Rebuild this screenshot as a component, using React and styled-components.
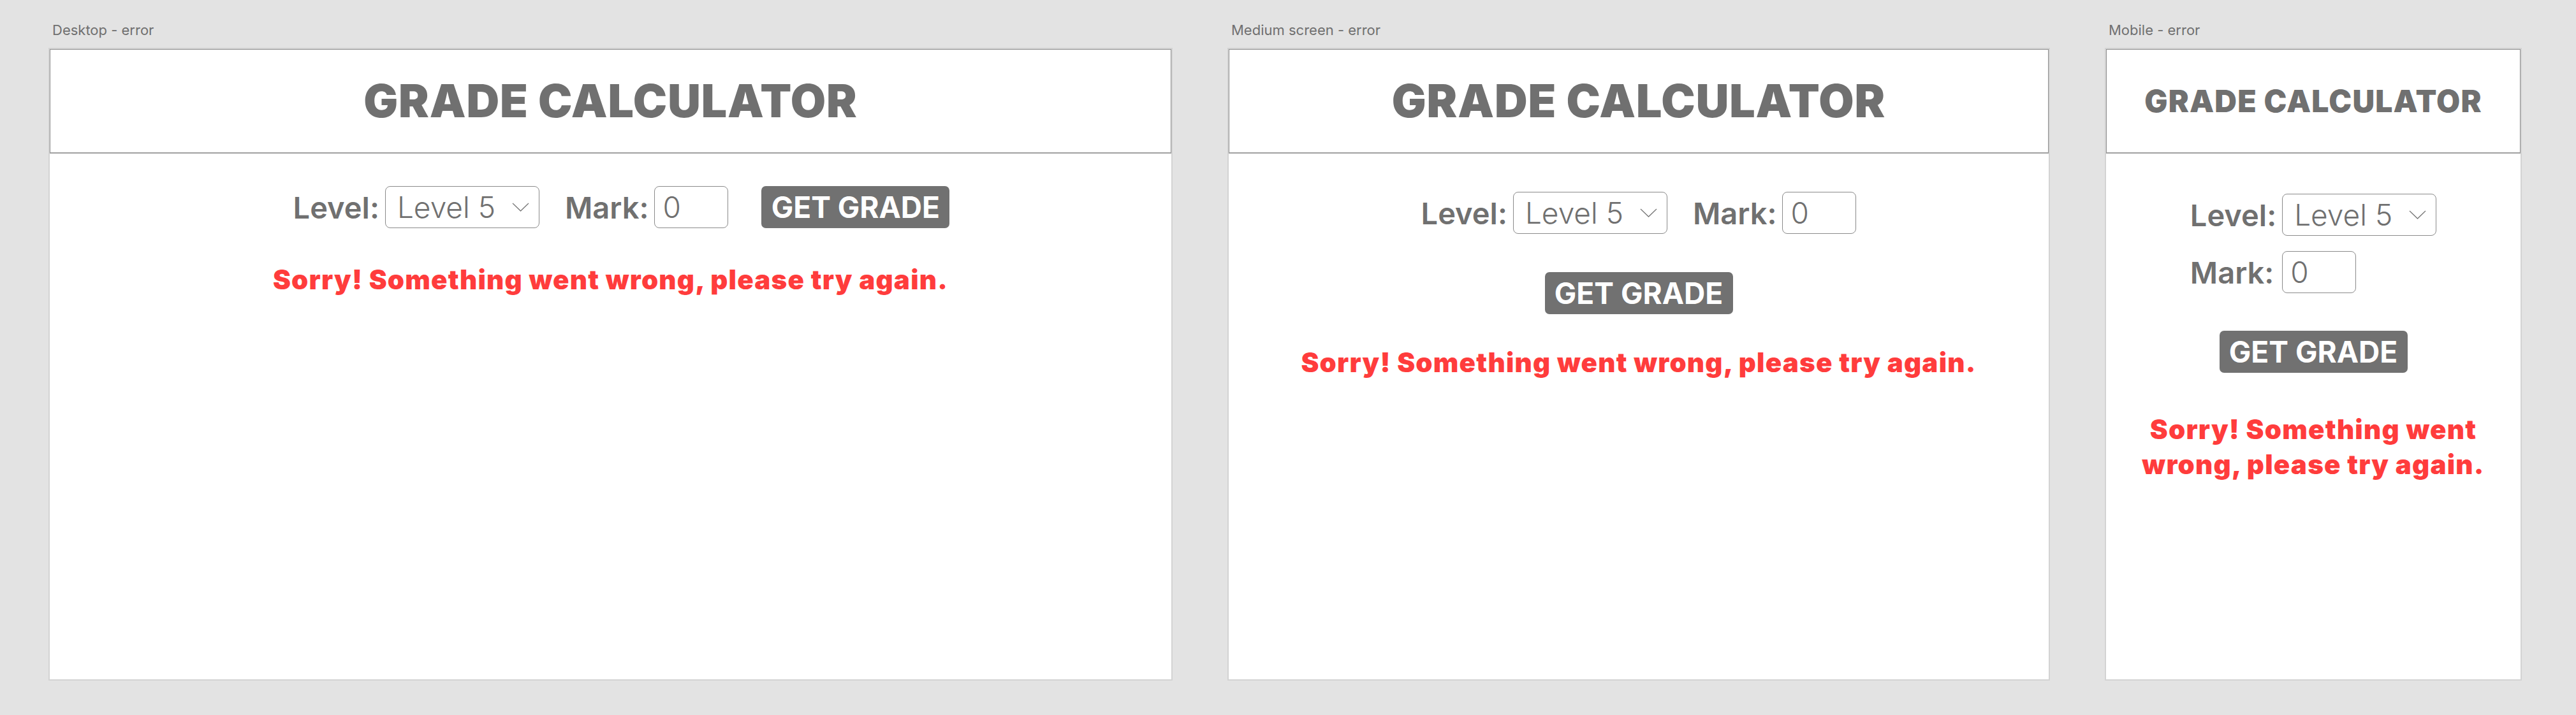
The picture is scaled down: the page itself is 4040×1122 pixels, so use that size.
import React from "react";
import styled, { createGlobalStyle } from "styled-components";

const GlobalStyle = createGlobalStyle`
  body {
    margin: 0;
    background: #e3e3e3;
    font-family: "Inter", "Roboto", sans-serif;
  }
`;

const Board = styled.div`
  display: flex;
  align-items: flex-start;
  gap: 86px;
  padding-left: 76px;
  height: 1122px;
  box-sizing: border-box;
  background: #e3e3e3;
`;

const Column = styled.section`
  display: flex;
  flex-direction: column;
  padding-top: 34px;
`;

const FrameLabel = styled.div`
  font-family: "Inter", sans-serif;
  font-size: 22px;
  line-height: 26px;
  color: #707070;
  margin-bottom: 15px;
  padding-left: 6px;
`;

const Frame = styled.div`
  width: ${(p) => p.$width}px;
  height: 993px;
  box-sizing: border-box;
  border: 2px solid #d3d3d3;
  background: #fff;
  display: flex;
  flex-direction: column;
`;

const Header = styled.header`
  height: 164px;
  box-sizing: border-box;
  border: 1px solid #8e8e8e;
  border-bottom: 2px solid #a0a0a0;
  display: flex;
  align-items: center;
  justify-content: center;
`;

const Title = styled.h1`
  margin: 0;
  font-family: "Inter", sans-serif;
  font-weight: 900;
  font-size: ${(p) => p.$size}px;
  line-height: 1;
  letter-spacing: ${(p) => p.$spacing}px;
  color: #707070;
`;

const Body = styled.main`
  display: flex;
  flex-direction: column;
  align-items: center;
  padding-top: ${(p) => p.$top}px;
`;

const Row = styled.div`
  display: flex;
  align-items: center;
  gap: 40px;
  padding-left: ${(p) => p.$shift || 0}px;
`;

const Field = styled.div`
  display: flex;
  align-items: center;
  gap: 9px;
`;

const FieldGrid = styled.div`
  display: grid;
  grid-template-columns: auto auto;
  column-gap: 9px;
  row-gap: 24px;
  align-items: center;
  justify-items: start;
`;

const FieldLabel = styled.label`
  font-family: "Inter", sans-serif;
  font-weight: 600;
  font-size: 47px;
  line-height: 1;
  color: #707070;
`;

const SelectWrap = styled.div`
  width: 242px;
  height: 66px;
  box-sizing: border-box;
  border: 1px solid #8a8a8a;
  border-radius: 8px;
  display: flex;
  align-items: center;
  padding: 0 15px 0 18px;
`;

const Select = styled.select`
  appearance: none;
  -webkit-appearance: none;
  border: none;
  background: transparent;
  outline: none;
  padding: 0;
  flex: 1;
  font-family: "Inter", sans-serif;
  font-weight: 300;
  font-size: 46px;
  color: #707070;
`;

const MarkInput = styled.input`
  width: 116px;
  height: 66px;
  box-sizing: border-box;
  border: 1px solid #8a8a8a;
  border-radius: 8px;
  padding: 0 12px;
  outline: none;
  font-family: "Inter", sans-serif;
  font-weight: 300;
  font-size: 46px;
  color: #707070;
`;

const GradeButton = styled.button`
  width: 295px;
  height: 66px;
  border: none;
  border-radius: 7px;
  background: #717171;
  color: #fff;
  padding: 0;
  font-family: "Inter", sans-serif;
  font-weight: 700;
  font-size: 46px;
  line-height: 1;
  margin-left: ${(p) => p.$left || 0}px;
  margin-top: ${(p) => p.$top || 0}px;
`;

const ErrorText = styled.p`
  margin: ${(p) => p.$top}px 0 0;
  max-width: ${(p) => p.$max || 2000}px;
  text-align: center;
  font-family: "Inter", sans-serif;
  font-weight: 900;
  font-size: 42px;
  line-height: ${(p) => p.$lh || 48}px;
  letter-spacing: 1.2px;
  color: #ff3c3c;
`;

const Chevron = () => (
  <svg width="27" height="14" viewBox="0 0 27 14">
    <polyline points="1,1 13.5,13 26,1" fill="none" stroke="#777" strokeWidth="1.3" />
  </svg>
);

const LevelSelect = () => (
  <SelectWrap>
    <Select defaultValue="5">
      <option value="5">Level 5</option>
    </Select>
    <Chevron />
  </SelectWrap>
);

const message = "Sorry! Something went wrong, please try again.";

const App = () => {
  return (
    <>
      <GlobalStyle />
      <Board>
        <Column>
          <FrameLabel>Desktop - error</FrameLabel>
          <Frame $width={1763}>
            <Header>
              <Title $size={71.5} $spacing={0.9}>GRADE CALCULATOR</Title>
            </Header>
            <Body $top={51}>
              <Row $shift={34}>
                <Field>
                  <FieldLabel>Level:</FieldLabel>
                  <LevelSelect />
                </Field>
                <Field>
                  <FieldLabel>Mark:</FieldLabel>
                  <MarkInput defaultValue="0" />
                </Field>
                <GradeButton $left={12}>GET GRADE</GradeButton>
              </Row>
              <ErrorText $top={57}>{message}</ErrorText>
            </Body>
          </Frame>
        </Column>

        <Column>
          <FrameLabel>Medium screen - error</FrameLabel>
          <Frame $width={1290}>
            <Header>
              <Title $size={71.5} $spacing={0.9}>GRADE CALCULATOR</Title>
            </Header>
            <Body $top={60}>
              <Row>
                <Field>
                  <FieldLabel>Level:</FieldLabel>
                  <LevelSelect />
                </Field>
                <Field>
                  <FieldLabel>Mark:</FieldLabel>
                  <MarkInput defaultValue="0" />
                </Field>
              </Row>
              <GradeButton $top={60}>GET GRADE</GradeButton>
              <ErrorText $top={52}>{message}</ErrorText>
            </Body>
          </Frame>
        </Column>

        <Column>
          <FrameLabel>Mobile - error</FrameLabel>
          <Frame $width={654}>
            <Header>
              <Title $size={48} $spacing={1.2}>GRADE CALCULATOR</Title>
            </Header>
            <Body $top={63}>
              <FieldGrid>
                <FieldLabel>Level:</FieldLabel>
                <LevelSelect />
                <FieldLabel>Mark:</FieldLabel>
                <MarkInput defaultValue="0" />
              </FieldGrid>
              <GradeButton $top={59}>GET GRADE</GradeButton>
              <ErrorText $top={61} $lh={55} $max={580}>
                {message}
              </ErrorText>
            </Body>
          </Frame>
        </Column>
      </Board>
    </>
  );
};

export default App;
